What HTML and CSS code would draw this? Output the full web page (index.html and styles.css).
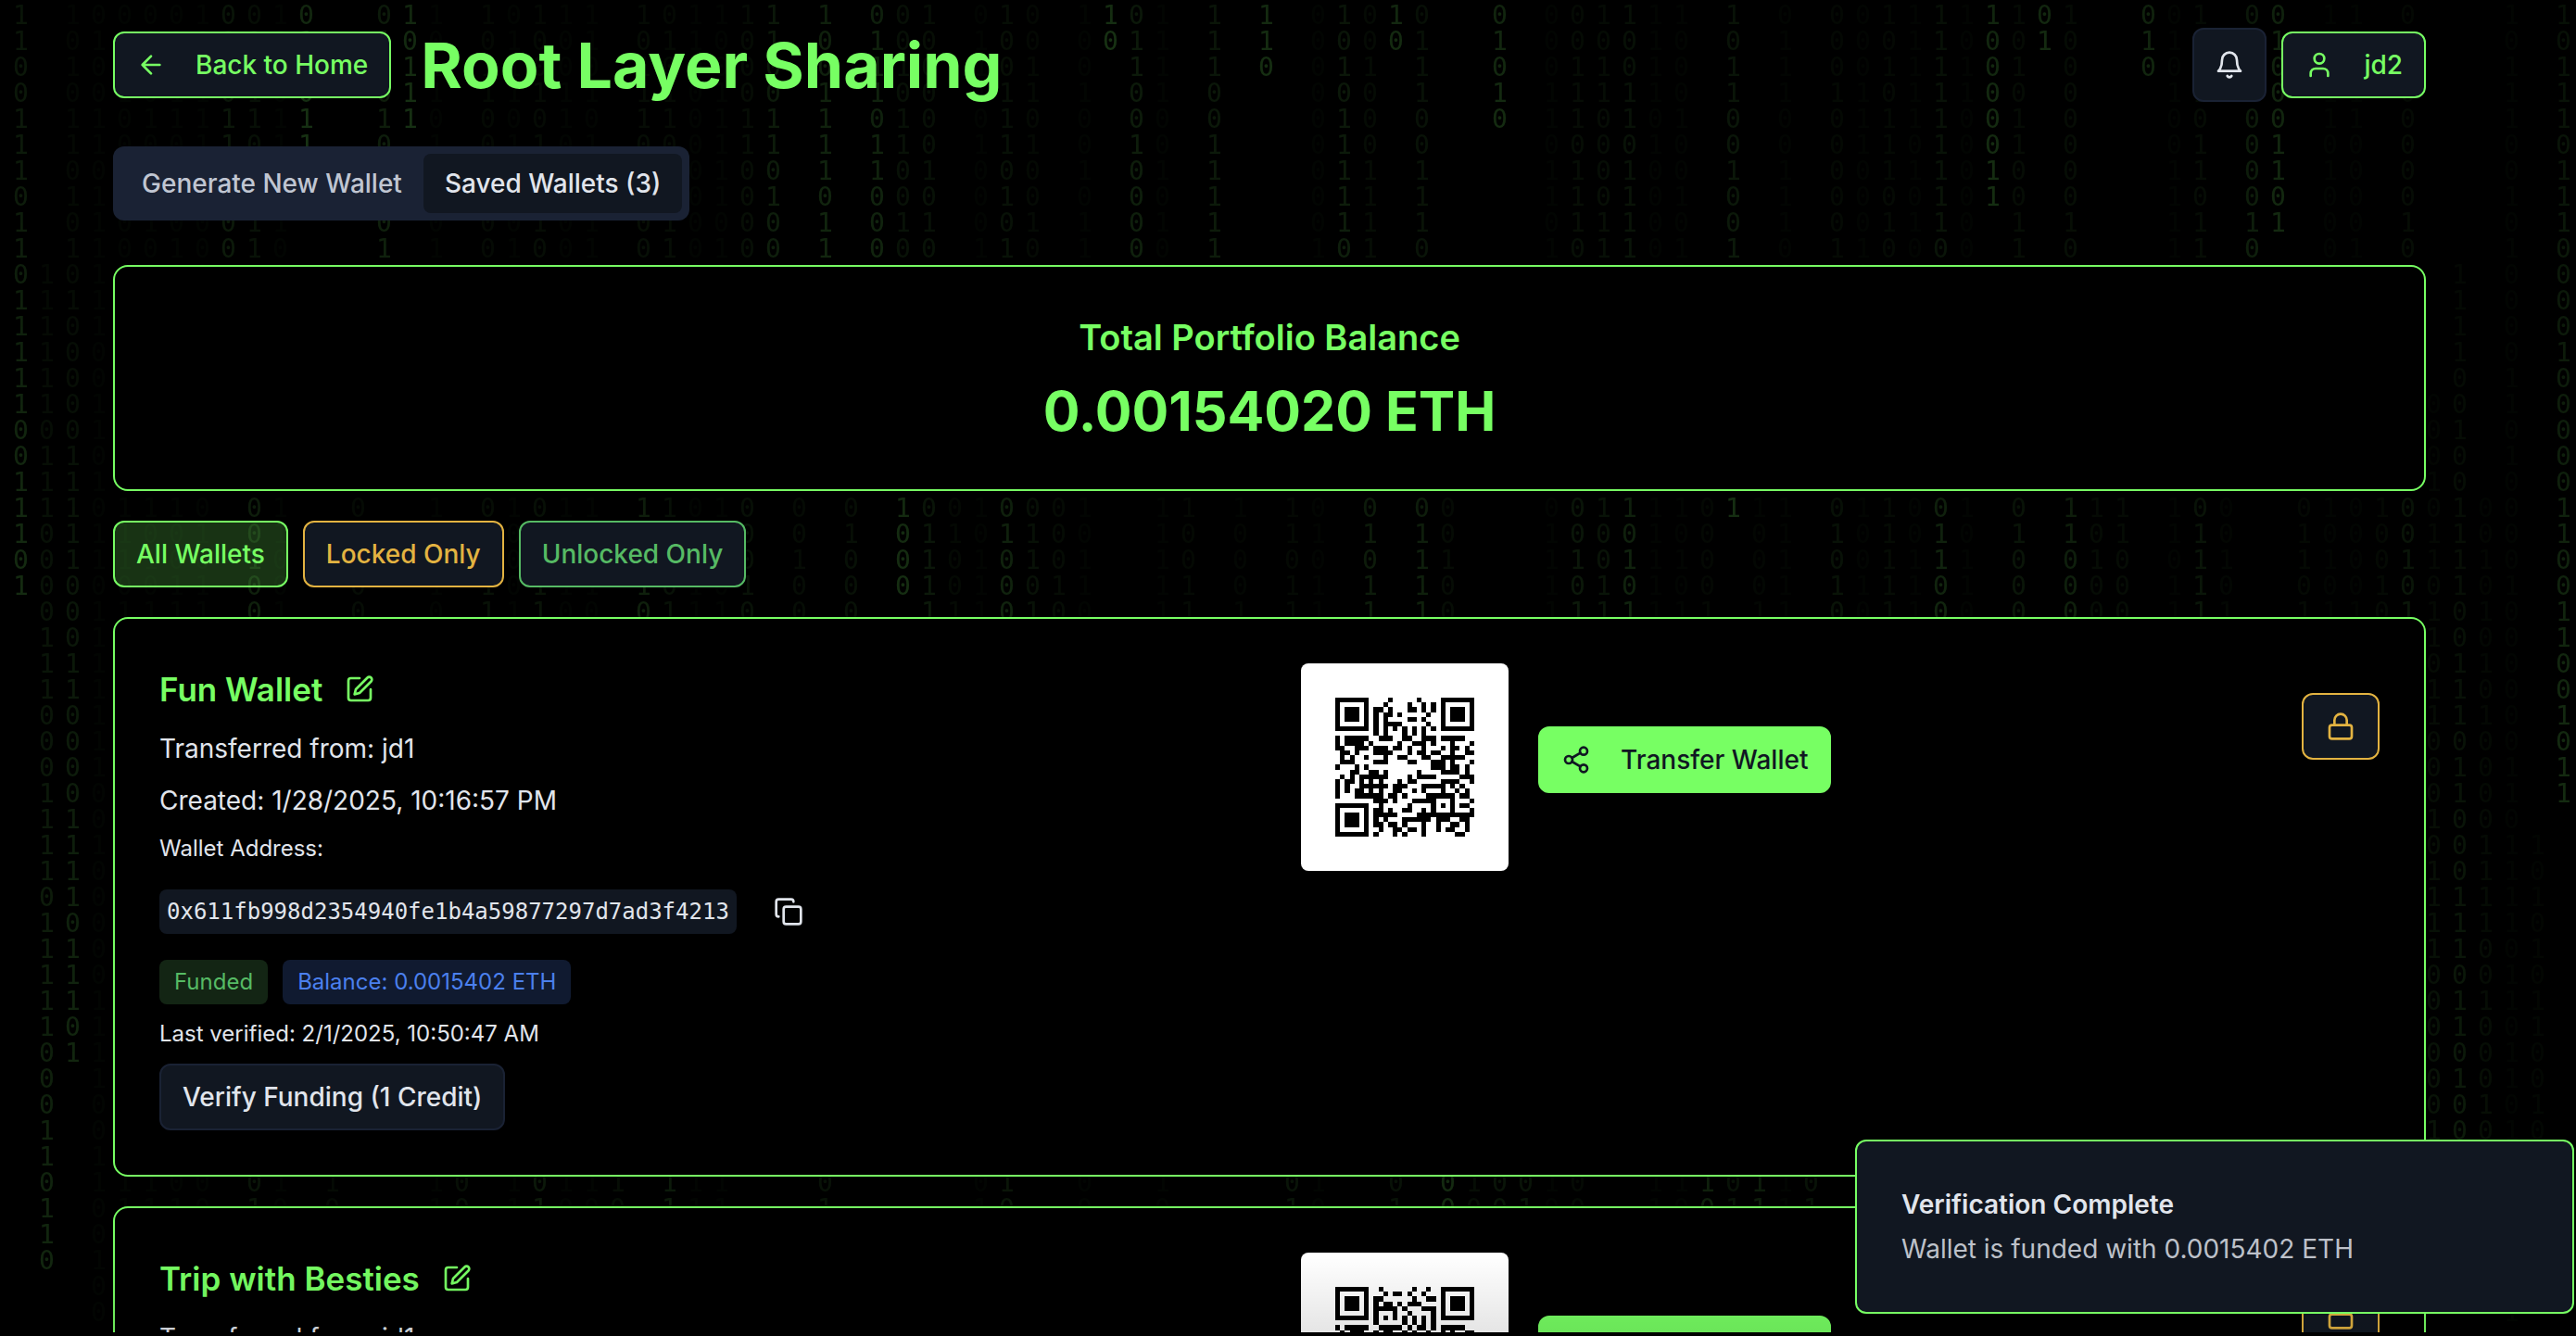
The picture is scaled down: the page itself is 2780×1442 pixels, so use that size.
FILE: index.html
```html
<!DOCTYPE html>
<html lang="en">
<head>
<meta charset="utf-8">
<meta name="viewport" content="width=device-width, initial-scale=1">
<title>Root Layer Sharing</title>
<link rel="stylesheet" href="styles.css">
</head>
<body>
<svg class="sprite" aria-hidden="true">
  <symbol id="i-arrow" viewBox="0 0 24 24"><path d="m12 19-7-7 7-7M19 12H5"/></symbol>
  <symbol id="i-bell" viewBox="0 0 24 24"><path d="M6 8a6 6 0 0 1 12 0c0 7 3 9 3 9H3s3-2 3-9M10.3 21a1.94 1.94 0 0 0 3.4 0"/></symbol>
  <symbol id="i-user" viewBox="0 0 24 24"><path d="M19 21v-2a4 4 0 0 0-4-4H9a4 4 0 0 0-4 4v2"/><circle cx="12" cy="7" r="4"/></symbol>
  <symbol id="i-edit" viewBox="0 0 24 24"><path d="M12 3H5a2 2 0 0 0-2 2v14a2 2 0 0 0 2 2h14a2 2 0 0 0 2-2v-7"/><path d="M18.375 2.625a2.121 2.121 0 1 1 3 3L12 15l-4 1 1-4Z"/></symbol>
  <symbol id="i-copy" viewBox="0 0 24 24"><rect x="8" y="8" width="14" height="14" rx="2"/><path d="M4 16c-1.1 0-2-.9-2-2V4c0-1.1.9-2 2-2h10c1.1 0 2 .9 2 2"/></symbol>
  <symbol id="i-share" viewBox="0 0 24 24"><circle cx="18" cy="5" r="3"/><circle cx="6" cy="12" r="3"/><circle cx="18" cy="19" r="3"/><path d="m8.59 13.51 6.83 3.98M15.41 6.51l-6.82 3.98"/></symbol>
  <symbol id="i-lock" viewBox="0 0 24 24"><rect x="3" y="11" width="18" height="11" rx="2"/><path d="M7 11V7a5 5 0 0 1 10 0v4"/></symbol>
</svg>

<div class="rain" aria-hidden="true"></div>

<div class="page">
  <header class="topbar">
    <button class="btn btn-outline" type="button"><svg class="icon"><use href="#i-arrow"/></svg>Back to Home</button>
    <h1>Root Layer Sharing</h1>
    <div class="topbar-actions">
      <button class="btn btn-bell" type="button" aria-label="Notifications"><svg class="icon"><use href="#i-bell"/></svg></button>
      <button class="btn btn-outline" type="button"><svg class="icon"><use href="#i-user"/></svg>jd2</button>
    </div>
  </header>

  <div class="tabs" role="tablist">
    <button class="tab" type="button" role="tab" aria-selected="false">Generate New Wallet</button>
    <button class="tab tab-active" type="button" role="tab" aria-selected="true">Saved Wallets (3)</button>
  </div>

  <main class="stack">
    <section class="card total">
      <h2>Total Portfolio Balance</h2>
      <p>0.00154020 ETH</p>
    </section>

    <div class="filters">
      <button class="btn filter-all" type="button">All Wallets</button>
      <button class="btn filter-locked" type="button">Locked Only</button>
      <button class="btn filter-unlocked" type="button">Unlocked Only</button>
    </div>

    <article class="card wallet">
      <div class="wallet-info">
        <div class="wallet-name"><h3>Fun Wallet</h3><button class="icon-btn" type="button" aria-label="Rename wallet"><svg class="icon"><use href="#i-edit"/></svg></button></div>
        <p>Transferred from: jd1</p>
        <p>Created: 1/28/2025, 10:16:57 PM</p>
        <p class="small">Wallet Address:</p>
        <div class="address"><code>0x611fb998d2354940fe1b4a59877297d7ad3f4213</code><button class="icon-btn copy" type="button" aria-label="Copy address"><svg class="icon"><use href="#i-copy"/></svg></button></div>
        <div class="badges"><span class="badge funded">Funded</span><span class="badge balance">Balance: 0.0015402 ETH</span></div>
        <p class="small">Last verified: 2/1/2025, 10:50:47 AM</p>
        <button class="btn btn-verify" type="button">Verify Funding (1 Credit)</button>
      </div>
      <div class="wallet-side">
        <div class="qr" data-address="0x611fb998d2354940fe1b4a59877297d7ad3f4213"></div>
        <button class="btn btn-transfer" type="button"><svg class="icon"><use href="#i-share"/></svg>Transfer Wallet</button>
        <button class="btn btn-lock" type="button" aria-label="Locked"><svg class="icon"><use href="#i-lock"/></svg></button>
      </div>
    </article>

    <article class="card wallet">
      <div class="wallet-info">
        <div class="wallet-name"><h3>Trip with Besties</h3><button class="icon-btn" type="button" aria-label="Rename wallet"><svg class="icon"><use href="#i-edit"/></svg></button></div>
        <p>Transferred from: jd1</p>
      </div>
      <div class="wallet-side">
        <div class="qr" data-address="0x3c0e1f7ab2294d8be65f1d07c48ae935f6b17d0c"></div>
        <button class="btn btn-transfer" type="button"><svg class="icon"><use href="#i-share"/></svg>Transfer Wallet</button>
        <button class="btn btn-lock" type="button" aria-label="Locked"><svg class="icon"><use href="#i-lock"/></svg></button>
      </div>
    </article>
  </main>
  <div class="fade"></div>
</div>

<div class="toast" role="status">
  <strong>Verification Complete</strong>
  <p>Wallet is funded with 0.0015402 ETH</p>
</div>
<script src="app.js"></script>
</body>
</html>
```
FILE: styles.css
```css
:root {
  --green: #77ff63;
  --gold: #e3b341;
  --leaf: #56ba64;
  --panel: #111721;
  --panel-2: #1a2234;
  --text: #e1e5ec;
}
* { box-sizing: border-box; margin: 0; }
body {
  height: 100vh;
  overflow: hidden;
  position: relative;
  background: #000;
  color: var(--text);
  font: 28px/40px Inter, "Liberation Sans", sans-serif;
}
.sprite { display: none; }
.icon {
  width: 32px;
  height: 32px;
  flex: none;
  fill: none;
  stroke: currentColor;
  stroke-width: 2;
  stroke-linecap: round;
  stroke-linejoin: round;
}

/* falling digits behind the page */
.rain {
  position: absolute;
  inset: 0;
  overflow: hidden;
  display: grid;
  grid-auto-columns: 28px;
  grid-auto-rows: 28px;
  padding: 3px 0 0 14px;
  color: var(--green);
  font: 28px/28px "DejaVu Sans Mono", monospace;
}
.drop {
  white-space: pre;
  mask-image: linear-gradient(rgba(0, 0, 0, var(--tail)), rgba(0, 0, 0, var(--head)));
}

.page {
  position: relative;
  height: calc(100vh - 4px);
  overflow: hidden;
  padding: 30px 162px 0 122px;
}
.fade {
  position: absolute;
  inset: auto 0 0 0;
  height: 84px;
  background: linear-gradient(transparent, rgba(0, 0, 0, .1));
  pointer-events: none;
}

.btn {
  display: inline-flex;
  align-items: center;
  gap: 32px;
  height: 72px;
  padding: 0 23px;
  border: 2px solid var(--panel-2);
  border-radius: 12px;
  background: var(--panel);
  color: var(--text);
  font: 500 28px/40px Inter, "Liberation Sans", sans-serif;
  white-space: nowrap;
}
.btn-outline { border-color: var(--green); color: var(--green); }
.btn-bell { width: 80px; height: 80px; justify-content: center; padding: 0; }

.topbar { display: flex; align-items: center; gap: 32px; height: 80px; }
.topbar h1 { color: var(--green); font-size: 68px; line-height: 80px; font-weight: 700; white-space: nowrap; }
.topbar-actions { display: flex; align-items: center; gap: 16px; margin-left: auto; }

.tabs {
  display: flex;
  width: fit-content;
  margin: 48px 0;
  padding: 8px;
  border-radius: 12px;
  background: var(--panel-2);
}
.tab {
  height: 64px;
  padding: 0 23px;
  border: 0;
  border-radius: 8px;
  background: none;
  color: #c0c6d2;
  font: 500 28px/40px Inter, "Liberation Sans", sans-serif;
}
.tab-active { background: var(--panel); color: var(--text); }

.stack { display: flex; flex-direction: column; gap: 32px; }
.card { border: 2px solid var(--green); border-radius: 16px; background: #000; padding: 48px; }
.total { text-align: center; color: var(--green); }
.total h2 { font-size: 38px; line-height: 56px; font-weight: 600; }
.total p { margin-top: 16px; font-size: 59px; line-height: 72px; font-weight: 700; }

.filters { display: flex; gap: 16px; }
.filter-all { background: rgba(119, 255, 99, .2); border-color: var(--green); color: var(--green); }
.filter-locked { border-color: var(--gold); color: var(--gold); }
.filter-unlocked { border-color: var(--leaf); color: var(--leaf); }

.wallet { display: grid; grid-template-columns: 1fr 1fr; gap: 68px; }
.wallet-info { display: flex; flex-direction: column; align-items: flex-start; gap: 16px; }
.wallet-name { display: flex; align-items: center; gap: 12px; height: 56px; }
.wallet-name h3 { color: var(--green); font-size: 35px; line-height: 56px; font-weight: 600; }
.icon-btn {
  display: grid;
  place-items: center;
  width: 56px;
  height: 56px;
  padding: 0;
  border: 0;
  background: none;
  color: var(--green);
}
.small { font-size: 24px; line-height: 32px; }
.address { display: flex; align-items: center; gap: 16px; }
.address code {
  padding: 8px;
  border-radius: 8px;
  background: var(--panel);
  font: 24px/32px "DejaVu Sans Mono", monospace;
}
.copy { width: 80px; height: 72px; color: var(--text); }
.badges { display: flex; gap: 16px; }
.badge { padding: 8px 16px; border-radius: 8px; font-size: 24px; line-height: 32px; }
.funded { background: #132514; color: var(--leaf); }
.balance { background: #101a30; color: #4b80ee; }

.wallet-side { display: flex; align-items: flex-start; gap: 32px; }
.qr { width: 224px; height: 224px; padding: 37px; border-radius: 8px; background: #fff; }
.qr svg { display: block; width: 100%; height: 100%; }
.btn-transfer { margin-top: 68px; border-color: var(--green); background: var(--green); color: #101722; }
.btn-lock { margin: 32px 0 0 auto; padding: 0 24px; border-color: var(--gold); color: var(--gold); }

.toast {
  position: fixed;
  right: 2px;
  bottom: 24px;
  width: 776px;
  padding: 48px;
  border: 2px solid var(--green);
  border-radius: 12px;
  background: var(--panel);
}
.toast strong { display: block; font-weight: 600; }
.toast p { margin-top: 8px; color: #bdc1c9; }
```
FILE: app.js
```js
/* ---- digit rain: [column, first row, digits, head opacity, tail opacity] ---- */
const drops = [
  [0, 0, "11001110110111110011101", .17, .08],
  [1, 10, "111111011100001110001111011111000110110", .15, .03],
  [2, 10, "0100000111110001100001111011101", .15, .04],
  [2, 0, "1010110101", .04, .02],
  [8, 0, "0010110100", .1, .08], [9, 0, "0101100111", .07, .05],
  [11, 0, "010011", .2, .15], [14, 0, "0110101101", .13, .1], [15, 0, "10111", .19, .15],
  [18, 0, "1011001100", .04, .03], [20, 0, "1001011010", .05, .03],
  [24, 0, "1011101000", .06, .04], [25, 0, "0101100111", .05, .03],
  [28, 0, "1000110000", .06, .04], [29, 0, "1100110100", .12, .09],
  [31, 0, "1001111011", .15, .12], [33, 0, "0111011000", .14, .12],
  [34, 0, "0010110010", .07, .06], [35, 0, "1000001010", .07, .05],
  [38, 0, "1001110101", .07, .05], [39, 0, "0011010010", .04, .03],
  [42, 0, "10", .2, .17], [43, 0, "0110010000", .13, .09], [46, 0, "1110011111", .11, .08],
  [48, 0, "110", .18, .16], [51, 0, "1010111110", .12, .08], [52, 0, "0010001111", .05, .04],
  [53, 0, "10", .17, .15], [54, 0, "0111001110", .08, .06], [57, 0, "01010", .17, .14],
  [60, 0, "0011101110", .06, .04], [61, 0, "1011000011", .06, .04], [62, 0, "1001101111", .08, .06],
  [66, 0, "1011001001", .1, .07], [70, 0, "0001000001", .04, .03], [72, 0, "1010111010", .04, .03],
  [74, 0, "1111111110", .08, .06], [76, 0, "10000011", .18, .14], [77, 0, "1010110011", .05, .04],
  [78, 0, "01", .17, .15], [79, 0, "1000000010", .06, .04], [82, 0, "010", .15, .13],
  [84, 0, "1001011011", .05, .04], [86, 0, "0110000010", .12, .09], [87, 0, "010001101", .16, .13],
  [92, 0, "0110000010", .05, .03],
  [9, 19, "00100", .13, .11], [13, 19, "01100", .05, .04], [18, 19, "01011", .07, .05],
  [20, 19, "00111", .08, .06], [24, 19, "10110", .13, .11], [25, 19, "10101", .07, .06],
  [28, 19, "00010", .07, .06], [30, 19, "00100", .05, .04], [32, 19, "01000", .07, .05],
  [34, 19, "1000", .18, .16], [35, 19, "01111", .1, .08], [36, 19, "01001", .04, .03],
  [38, 19, "01000", .14, .12], [39, 19, "01101", .07, .06], [40, 19, "00010", .05, .04],
  [45, 19, "10011", .04, .03], [47, 19, "10001", .03, .02], [49, 19, "11011", .04, .03],
  [52, 19, "01011", .11, .1], [54, 19, "01111", .13, .11], [55, 19, "00100", .05, .04],
  [60, 19, "00101", .1, .08], [61, 19, "10011", .08, .07], [62, 19, "10101", .14, .12],
  [65, 19, "00001", .03, .03], [66, 19, "1", .18, .18], [67, 19, "10001", .03, .02],
  [70, 19, "01010", .08, .06], [72, 19, "11111", .05, .04], [74, 19, "01100", .15, .12],
  [77, 19, "01000", .09, .07], [79, 19, "11000", .13, .11], [80, 19, "10100", .05, .04],
  [81, 19, "11000", .05, .04], [84, 19, "01111", .09, .07], [85, 19, "00101", .03, .02],
  [88, 19, "01101", .04, .03], [91, 19, "10010", .04, .03], [92, 19, "00101", .09, .07],
  [9, 45, "01", .08, .08], [12, 45, "10", .04, .04], [17, 45, "00", .06, .06],
  [20, 45, "01", .1, .09], [23, 45, "10", .05, .05], [25, 45, "11", .1, .1], [31, 45, "01", .07, .07],
  [38, 45, "10", .09, .08], [49, 45, "01", .08, .08], [53, 45, "01", .07, .07],
  [55, 45, "00", .17, .16], [56, 45, "10", .05, .05], [57, 45, "00", .08, .08],
  [58, 45, "01", .08, .08], [60, 45, "00", .04, .04], [65, 45, "10", .13, .12],
  [66, 45, "01", .07, .07], [67, 45, "11", .11, .11], [69, 45, "01", .07, .07],
  [93, 15, "00010110110110001011110000001", .08, .02],
  [94, 10, "1111001001111001110110001110110100101", .11, .03],
  [95, 19, "00101010100001111001000101", .06, .02],
  [97, 32, "10101011001011", .03, .02],
  [98, 0, "1011101110000100000110011001011", .17, .06]
];

const rain = document.querySelector(".rain");
function addDrop([col, row, digits, head, tail]) {
  const el = document.createElement("div");
  el.className = "drop";
  el.textContent = [...digits].join("\n");
  el.style.gridArea = `${row + 1} / ${col + 1} / span ${digits.length}`;
  el.style.setProperty("--head", head);
  el.style.setProperty("--tail", tail);
  rain.append(el);
}
let seed = 7;
const random = () => (seed = (seed * 16807) % 2147483647) / 2147483647;
const used = new Set(drops.map(d => d[0]));
for (let col = 0; col < 99; col++) {
  if (used.has(col)) continue;
  let digits = "";
  for (let row = 0; row < 51; row++) digits += random() < .5 ? "0" : "1";
  addDrop([col, 0, digits, .02, .02]);
}
drops.forEach(addDrop);

/* ---- QR code: version 3, error level M, mask 2 ---- */
const SIZE = 29, DATA_WORDS = 44, EC_WORDS = 26;
const FORMAT = 0b101111001111100;

function encodeData(text) {
  let bits = "";
  const put = (value, length) => { bits += value.toString(2).padStart(length, "0"); };
  const parts = [];
  for (const part of text.match(/\d+|\D+/g)) {
    const last = parts[parts.length - 1];
    const ends = text.endsWith(part) && part.length >= 4;
    const numeric = /^\d+$/.test(part) && (part.length > 5 || ends);
    if (!numeric && last && !last.numeric) last.text += part;
    else parts.push({ numeric, text: part });
  }
  for (const { numeric, text: t } of parts) {
    if (numeric) {
      put(1, 4); put(t.length, 10);
      for (const g of t.match(/\d{1,3}/g)) put(+g, g.length * 3 + 1);
    } else {
      put(4, 4); put(t.length, 8);
      for (const c of t) put(c.charCodeAt(0), 8);
    }
  }
  bits += "0".repeat(Math.min(4, DATA_WORDS * 8 - bits.length));
  while (bits.length % 8) bits += "0";
  const words = bits.match(/.{8}/g).map(b => parseInt(b, 2));
  for (let i = 0; words.length < DATA_WORDS; i++) words.push(i % 2 ? 17 : 236);
  return words;
}

function multiply(a, b) {
  let r = 0;
  for (; b; b >>= 1) { if (b & 1) r ^= a; a <<= 1; if (a & 256) a ^= 285; }
  return r;
}
function errorWords(data) {
  let gen = [1], root = 1;
  for (let i = 0; i < EC_WORDS; i++) {
    const next = [...gen, 0];
    gen.forEach((g, j) => { next[j + 1] ^= multiply(g, root); });
    gen = next;
    root = multiply(root, 2);
  }
  const rem = [...data, ...Array(EC_WORDS).fill(0)];
  for (let i = 0; i < data.length; i++) {
    const f = rem[i];
    gen.forEach((g, j) => { rem[i + j] ^= multiply(g, f); });
  }
  return rem.slice(data.length);
}

function qrMatrix(text) {
  const m = Array.from({ length: SIZE }, () => Array(SIZE).fill(null));
  const finder = (y, x) => {
    for (let r = -1; r < 8; r++) for (let c = -1; c < 8; c++) {
      if (m[y + r] === undefined || x + c < 0 || x + c >= SIZE) continue;
      const d = Math.max(Math.abs(r - 3), Math.abs(c - 3));
      m[y + r][x + c] = d !== 2 && d !== 4;
    }
  };
  finder(0, 0); finder(0, SIZE - 7); finder(SIZE - 7, 0);
  for (let r = -2; r < 3; r++) for (let c = -2; c < 3; c++)
    m[22 + r][22 + c] = Math.max(Math.abs(r), Math.abs(c)) !== 1;
  for (let i = 8; i < SIZE - 8; i++) m[6][i] = m[i][6] = i % 2 === 0;
  for (let i = 0; i < 15; i++) {
    const bit = (FORMAT >> i & 1) === 1;
    m[i < 6 ? i : i < 8 ? i + 1 : SIZE - 15 + i][8] = bit;
    m[8][i < 8 ? SIZE - 1 - i : i < 9 ? 7 : 14 - i] = bit;
  }
  m[SIZE - 8][8] = true;

  const data = encodeData(text);
  const bits = [...data, ...errorWords(data)].map(w => w.toString(2).padStart(8, "0")).join("");
  let n = 0, up = true;
  for (let col = SIZE - 1; col > 0; col -= 2) {
    if (col === 6) col--;
    for (let i = 0; i < SIZE; i++) {
      const row = up ? SIZE - 1 - i : i;
      for (const c of [col, col - 1]) {
        if (m[row][c] !== null) continue;
        m[row][c] = (bits[n++] === "1") !== (c % 3 === 0);
      }
    }
    up = !up;
  }
  return m;
}

document.querySelectorAll(".qr").forEach(box => {
  let d = "";
  qrMatrix(box.dataset.address).forEach((row, y) =>
    row.forEach((on, x) => { if (on) d += `M${x} ${y}h1v1h-1z`; }));
  box.innerHTML = `<svg viewBox="0 0 ${SIZE} ${SIZE}" shape-rendering="crispEdges" role="img" aria-label="Wallet address QR code"><path d="${d}"/></svg>`;
});
```
